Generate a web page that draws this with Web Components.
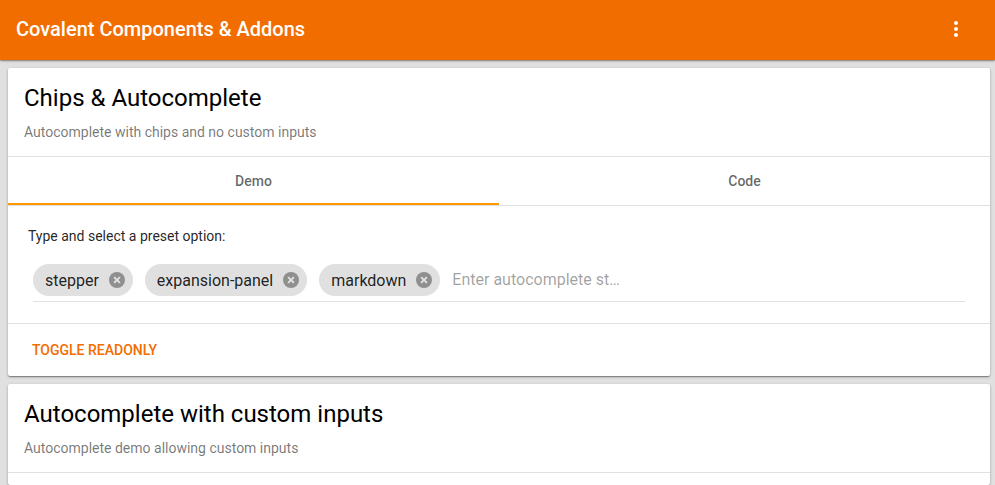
<!DOCTYPE html>
<html><head><meta charset="utf-8">
<style>
html,body{margin:0;height:485px;overflow:hidden;background:#e0e0e0;font-family:Roboto,"Liberation Sans",sans-serif}
</style></head><body>
<template id="t-bar"><style>
:host{display:flex;align-items:center;height:60px;background:#f26d00;color:#fff;padding:0 27px 0 16px;font-size:20px;font-weight:500;box-shadow:0 1px 3px rgba(0,0,0,.2),0 1px 1px rgba(0,0,0,.14),0 2px 1px -1px rgba(0,0,0,.12);position:relative;z-index:2;box-sizing:border-box}
.t{flex:1;margin-bottom:2px}
svg{display:block;width:24px;height:24px}
</style><span class="t"><slot></slot></span><svg viewBox="0 0 24 24" fill="#fff"><circle cx="12" cy="5" r="2"/><circle cx="12" cy="11" r="2"/><circle cx="12" cy="17" r="2"/></svg></template>

<template id="t-card"><style>
:host{display:block;background:#fff;border-radius:2px;box-shadow:0 1px 3px rgba(0,0,0,.26),0 1px 1px rgba(0,0,0,.18),0 2px 1px -1px rgba(0,0,0,.16);margin-bottom:8px}
.h{padding:16px 16px 0;height:72px}
.ti{font-size:24px;line-height:28px;color:#000;font-weight:400}
.su{font-size:14px;line-height:20px;color:rgba(0,0,0,.54);margin-top:10px}
.d{border-top:1px solid #e0e0e0}
</style><div class="h"><div class="ti"><slot name="title"></slot></div><div class="su"><slot name="sub"></slot></div></div><div class="d"></div><slot></slot></template>

<template id="t-tabs"><style>
:host{display:flex;height:49px;box-sizing:border-box;border-bottom:1px solid #e0e0e0;font-size:14px;font-weight:500;color:rgba(0,0,0,.6)}
div{flex:1;display:flex;align-items:center;justify-content:center;box-sizing:border-box;height:48px}
.a{border-bottom:2px solid #ff9800;padding-top:2px}
</style><div class="a">Demo</div><div>Code</div></template>

<template id="t-chip"><style>
:host{display:inline-flex;align-items:center;height:32px;border-radius:16px;background:#e0e0e0;padding:0 8px 0 12px;font-size:16px;color:rgba(0,0,0,.87);box-sizing:border-box}
svg{display:block;width:16px;height:16px;margin-left:10px}
</style><slot></slot><svg viewBox="0 0 16 16"><circle cx="8" cy="8" r="8" fill="#8f8f8f"/><path d="M5.1 5.1l5.8 5.8M10.9 5.1l-5.8 5.8" stroke="#e0e0e0" stroke-width="2" fill="none"/></svg></template>

<template id="t-field"><style>
:host{display:flex;align-items:center;gap:12px;margin:0 5px 0 5px;padding-bottom:5px;border-bottom:1px solid #e0e0e0;height:32px}
.p{font-size:16px;color:rgba(0,0,0,.38);white-space:nowrap;margin-bottom:1px}
</style><slot></slot><span class="p">Enter autocomplete st…</span></template>

<template id="t-demo"><style>
:host{display:block;padding:20px 20px 21px;box-sizing:border-box;height:118px;border-bottom:1px solid #e0e0e0}
.l{font-size:14px;line-height:20px;color:rgba(0,0,0,.87);margin-bottom:18px}
</style><div class="l"><slot name="label"></slot></div><slot></slot></template>

<template id="t-actions"><style>
:host{display:block;padding:0 24px;height:52px;line-height:52px;font-size:14px;font-weight:500;color:#f26d00}
</style><slot></slot></template>

<template id="t-body"><style>:host{display:block;height:12px}</style><slot></slot></template>

<x-bar>Covalent Components &amp; Addons</x-bar>
<x-main>
<x-card>
<span slot="title">Chips &amp; Autocomplete</span>
<span slot="sub">Autocomplete with chips and no custom inputs</span>
<x-tabs></x-tabs>
<x-demo><span slot="label">Type and select a preset option:</span>
<x-field><x-chip>stepper</x-chip><x-chip>expansion-panel</x-chip><x-chip>markdown</x-chip></x-field>
</x-demo>
<x-actions>TOGGLE READONLY</x-actions>
</x-card>
<x-card>
<span slot="title">Autocomplete with custom inputs</span>
<span slot="sub">Autocomplete demo allowing custom inputs</span>
<x-body></x-body>
</x-card>
</x-main>
<script>
const mk=(n,id,css)=>customElements.define(n,class extends HTMLElement{constructor(){super();const s=this.attachShadow({mode:'open'});
if(id)s.appendChild(document.getElementById(id).content.cloneNode(true));else s.innerHTML=css;}});
mk('x-bar','t-bar');mk('x-card','t-card');mk('x-tabs','t-tabs');mk('x-chip','t-chip');mk('x-field','t-field');mk('x-demo','t-demo');mk('x-actions','t-actions');mk('x-body','t-body');
mk('x-main',null,'<style>:host{display:block;height:425px;box-sizing:border-box;overflow:hidden;padding:8px 5px 0 8px}</style><slot></slot>');
</script>
</body></html>
